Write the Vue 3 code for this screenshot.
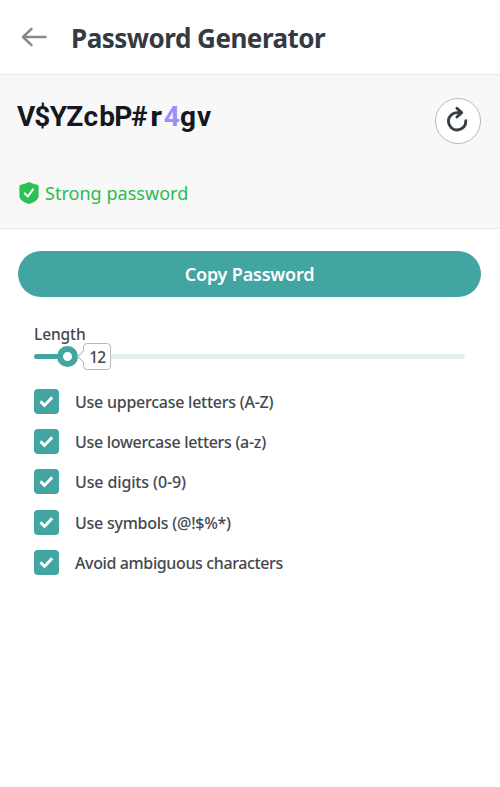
<script setup>
import { ref, computed } from 'vue'

const length = ref(12)
const password = ref('V$YZcbP#r4gv')
const chars = computed(() => password.value.split(''))
const progress = computed(() => ((length.value - 8.3) / (56.2 - 8.3)) * 100)
const options = ref([
  { label: 'Use uppercase letters (A-Z)', spacing: 'upper', on: true },
  { label: 'Use lowercase letters (a-z)', spacing: 'lower', on: true },
  { label: 'Use digits (0-9)', spacing: 'digits', on: true },
  { label: 'Use symbols (@!$%*)', spacing: 'symbols', on: true },
  { label: 'Avoid ambiguous characters', spacing: 'avoid', on: true },
])
</script>

<template>
  <main class="page">
    <header class="header">
      <svg class="back" width="26" height="20" viewBox="0 0 26 20">
        <path d="M24.5 10H2M10.5 1.8L2 10l8.5 8.2" />
      </svg>
      <h1><span>Password Generator</span></h1>
    </header>

    <section class="panel">
      <div class="top">
        <div class="password">
          <span v-for="(c, i) in chars" :key="i" :class="{ digit: /\d/.test(c), wide: c === 'r' }">{{ c }}</span>
        </div>
        <button class="refresh" aria-label="Regenerate">
          <svg width="44" height="44" viewBox="0 0 44 44">
            <path d="M29.8 21.6A8.7 8.7 0 1 1 21.1 13.6H25.4M20.9 9.2L25.7 13.6L20.9 18" />
          </svg>
        </button>
      </div>
      <div class="strength">
        <svg width="20" height="22" viewBox="0 0 20 22">
          <path class="shield" d="M10 0Q14.5 2.3 18.2 2.8Q19.6 3 19.6 4.4V13.5C19.6 18.3 14.5 20.5 10 22C5.5 20.5 .4 18.3 .4 13.5V4.4Q.4 3 1.8 2.8Q5.5 2.3 10 0Z" />
          <path class="tick" d="M5.8 11.4l3 3.2L14 7.4" />
        </svg>
        <span>Strong password</span>
      </div>
    </section>

    <button class="copy"><span>Copy Password</span></button>

    <section class="settings">
      <div class="label"><span>Length</span></div>
      <div class="slider">
        <div class="fill" :style="{ width: progress + '%' }"></div>
        <div class="thumb" :style="{ left: progress + '%' }">
          <div class="tip">{{ length }}</div>
        </div>
      </div>
      <ul>
        <li v-for="o in options" :key="o.label">
          <span class="box">
            <svg v-if="o.on" width="25" height="25" viewBox="0 0 25 25">
              <path d="M6.5 12.4l4 4L18.2 8.2" />
            </svg>
          </span>
          <span class="text" :class="o.spacing">{{ o.label }}</span>
        </li>
      </ul>
    </section>
  </main>
</template>

<style>
body {
  background: #fff;
}
</style>

<style scoped>
* {
  box-sizing: border-box;
}
.page {
  width: 500px;
  height: 787px;
  overflow: hidden;
  font-family: 'Noto Sans', 'Open Sans', sans-serif;
  color: #43484d;
}
svg {
  display: block;
  fill: none;
  stroke-linecap: round;
  stroke-linejoin: round;
}
button {
  padding: 0;
  font: inherit;
}
.header {
  height: 74px;
  display: flex;
  align-items: center;
  padding-left: 21px;
}
.back {
  stroke: #868a90;
  stroke-width: 2.5;
}
h1 {
  margin: 2px 0 0 24px;
  font-size: 26px;
  line-height: 36px;
  font-weight: 700;
  letter-spacing: -0.5px;
  color: #343a42;
  white-space: nowrap;
}
.panel {
  height: 155px;
  background: #f8f8f8;
  border-top: 1px solid #ebebeb;
  border-bottom: 1px solid #e6e6e6;
  padding: 23px 19px 0 18px;
}
.top {
  display: flex;
  justify-content: space-between;
  height: 83px;
}
.password {
  display: flex;
  height: 36px;
  margin-top: 1px;
  font: 700 28px/36px Roboto, sans-serif;
  color: #15181e;
}
.password span {
  width: 16.2px;
  display: flex;
  justify-content: center;
}
.password .wide {
  transform: scaleX(1.15);
}
.password .digit {
  color: #9b8cff;
}
.refresh {
  width: 46px;
  height: 46px;
  border: 1px solid #b9b9b9;
  border-radius: 50%;
  background: #fff;
}
.refresh svg {
  stroke: #383e46;
  stroke-width: 2.9;
}
.strength {
  display: flex;
  align-items: center;
  gap: 6px;
  height: 24px;
  font-size: 18px;
  letter-spacing: 0.03px;
  color: #2abb50;
  white-space: nowrap;
}
.strength span {
  margin-left: 1px;
}
.shield {
  fill: #2bc155;
}
.tick {
  stroke: #fff;
  stroke-width: 2;
}
.strength svg {
  margin-left: 1px;
  margin-right: -1px;
}
.copy {
  display: block;
  width: 463px;
  height: 46px;
  margin: 22px 0 0 18px;
  border: 0;
  border-radius: 23px;
  background: #43a5a2;
  color: #fff;
  font-size: 18px;
  font-weight: 600;
  letter-spacing: -0.2px;
}
.settings {
  padding: 26px 35px 0 34px;
}
.label {
  height: 22px;
  font-size: 15.5px;
  line-height: 22px;
  font-weight: 500;
  letter-spacing: -0.1px;
}
.slider {
  position: relative;
  height: 5px;
  margin-top: 9px;
  border-radius: 3px;
  background: #e1f1f0;
}
.fill {
  height: 5px;
  border-radius: 3px;
  background: #43a5a2;
}
.thumb {
  position: absolute;
  top: -8px;
  width: 21px;
  height: 21px;
  margin-left: -10px;
  border: 6px solid #43a5a2;
  border-radius: 50%;
  background: #fff;
}
.tip {
  position: absolute;
  left: 20px;
  top: -9px;
  width: 28px;
  height: 27px;
  border: 1px solid #b8b8b8;
  border-radius: 4px;
  background: #fff;
  font-size: 15.5px;
  line-height: 27px;
  font-weight: 500;
  letter-spacing: -0.8px;
  text-align: center;
}
.tip::before {
  content: '';
  position: absolute;
  left: -5px;
  top: 8px;
  width: 8px;
  height: 8px;
  border-left: 1px solid #b8b8b8;
  border-bottom: 1px solid #b8b8b8;
  background: #fff;
  transform: rotate(45deg);
}
ul {
  list-style: none;
  margin: 29.6px 0 0;
  padding: 0;
}
li {
  display: flex;
  align-items: center;
  height: 25px;
  margin-bottom: 15.4px;
}
.box {
  width: 25px;
  height: 25px;
  border-radius: 4px;
  background: #43a5a2;
}
.box svg {
  stroke: #fff;
  stroke-width: 2.9;
  stroke-linecap: butt;
  stroke-linejoin: miter;
}
.text {
  margin: 1px 0 0 16px;
  font-size: 16px;
  font-weight: 500;
  white-space: nowrap;
}
.upper {
  letter-spacing: -0.25px;
}
.lower {
  letter-spacing: -0.3px;
}
.digits {
  letter-spacing: -0.13px;
}
.symbols {
  letter-spacing: -0.25px;
}
.avoid {
  letter-spacing: -0.38px;
}
</style>
